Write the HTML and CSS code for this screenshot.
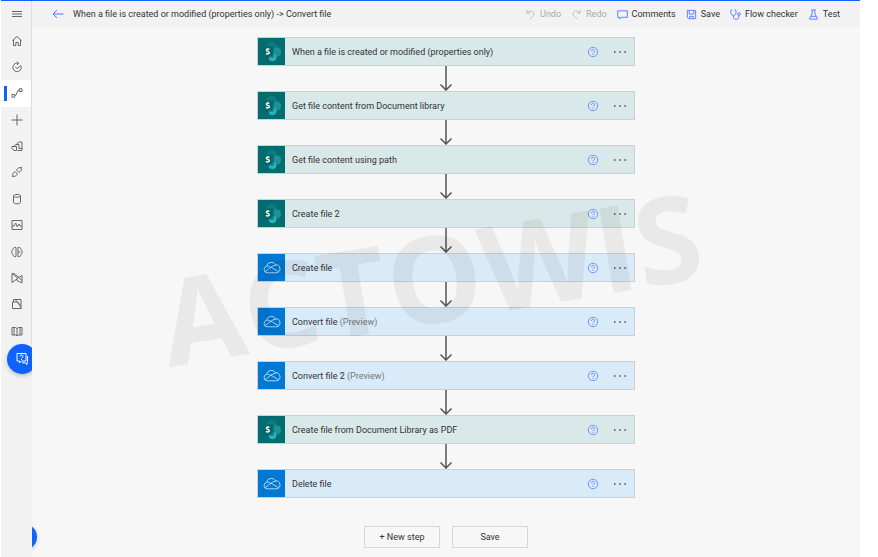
FILE: index.html
```html
<!DOCTYPE html>
<html lang="en">
<head>
    <meta charset="UTF-8">
    <meta name="viewport" content="width=device-width, initial-scale=1.0">
    <title>Edit your flow</title>
    <link rel="stylesheet" href="styles.css">
</head>
<body>
    <!-- Shared icons -->
    <svg class="sprite" aria-hidden="true">
        <symbol id="sharepoint" viewBox="0 0 28 28">
            <circle cx="14" cy="9.500" r="5.500" fill="#0b7c80"/>
            <circle cx="19" cy="14.500" r="5" fill="#1a9296"/>
            <circle cx="15" cy="20" r="4" fill="#28b5bd"/>
            <rect x="8" y="9" width="8.500" height="11.500" rx="1" fill="#035256" opacity="0.500"/>
            <rect x="5" y="9" width="10" height="10" rx="1" fill="#05686c"/>
            <path d="M11.800 11.800C10.600 11 8.700 11.300 8.700 12.700 8.700 14.200 11.700 13.600 11.700 15.200 11.700 16.700 9.500 16.800 8.300 16" fill="none" stroke="#fff" stroke-width="1.500"/>
        </symbol>
        <symbol id="onedrive" viewBox="0 0 28 28">
            <path d="M9.500 19.500a3.400 3.400 0 0 1-.6-6.700 5 5 0 0 1 9.300-1.600 4.200 4.200 0 0 1 1.200 8.300zM8.900 12.800c3-.6 4.600 1.200 12.500 5.500M7.200 18.500c3.500-2.500 6.500-6 11.500-7.200" fill="none" stroke="#b9dbf5"/>
        </symbol>
        <symbol id="help" viewBox="0 0 12 12">
            <circle cx="6" cy="6" r="4.700" fill="none" stroke="#6f93ff"/>
            <path d="M4.500 5a1.500 1.500 0 1 1 2.300 1.200Q6 6.600 6 7.200M6 8v1" fill="none" stroke="#6f93ff"/>
        </symbol>
        <symbol id="more" viewBox="0 0 14 4">
            <path d="M1 1.200h1.500v1.500H1zM6.200 1.200h1.500v1.500H6.200zM11.400 1.200h1.500v1.500h-1.500z" fill="#484848"/>
        </symbol>
        <symbol id="arrow" viewBox="0 0 14 25">
            <path d="M7 0v24M1.500 18.500 7 24l5.500-5.500" fill="none" stroke="#555" stroke-width="1.500"/>
        </symbol>
    </svg>

    <div class="app">
        <nav class="sidebar" aria-label="Main">
            <div class="menu">
                <button class="menu-item" type="button" aria-label="Menu"><svg viewBox="0 0 12 12"><path d="M1 3.500h10M1 6h10M1 8.500h10"/></svg></button>
                <a class="menu-item" href="#" aria-label="Home"><svg viewBox="0 0 12 12"><path d="M1.500 5.500 6 1.500l4.500 4M2.500 5v5.500h2.300V7.500h2.400v3h2.300V5"/></svg></a>
                <a class="menu-item" href="#" aria-label="Action items"><svg viewBox="0 0 12 12"><path d="M9.800 4.500A4.200 4.200 0 1 1 5.800 2.200L7.500 2.300M6 .500l1.700 1.800L6 4M4.300 6l1.600 1.500L9.500 5"/></svg></a>
                <a class="menu-item active" href="#" aria-label="My flows"><svg viewBox="0 0 12 12"><path d="M1 7.500h2.700v2.700H1zM8.200 1.800H11v2.700H8.200zM3.700 8.800C6.500 8.800 5.200 3 8.200 3"/></svg></a>
                <a class="menu-item" href="#" aria-label="Create"><svg viewBox="0 0 12 12"><path d="M6 .500v11M.500 6h11"/></svg></a>
                <a class="menu-item" href="#" aria-label="Templates"><svg viewBox="0 0 12 12"><path d="M5.500 4.500 7.500 2H11v8.500H6.500M1 6.500h4.500v4H3L1 8.700zM3 6.500 4.500 4.500H8v4h3"/></svg></a>
                <a class="menu-item" href="#" aria-label="Connectors"><svg viewBox="0 0 12 12"><path d="M1 11l1-1M11 1l-1 1M2 10C.800 8.500 2 7 4 5.500L6.500 8C5 10 3.500 11.200 2 10zM10 2C8.500.800 7 2 5.500 4L8 6.500C10 5 11.200 3.500 10 2z"/></svg></a>
                <a class="menu-item" href="#" aria-label="Data"><svg viewBox="0 0 12 12"><path d="M2.500 2.800v6.500c0 2 7 2 7 0V2.800M2.500 2.800c0-1.800 7-1.800 7 0s-7 1.800-7 0z"/></svg></a>
                <a class="menu-item" href="#" aria-label="Monitor"><svg viewBox="0 0 12 12"><path d="M1 1.500h10v9H1zM1 7h2l1.700-3L6.300 8 8 5l1 2h2"/></svg></a>
                <a class="menu-item" href="#" aria-label="AI Builder"><svg viewBox="0 0 12 12"><path d="M5 1.500v9C3 11 2 10 2 8.800.300 8 .300 4.500 2 3.500 2 2 3 1 5 1.500zM7 1.500v9c2 .500 2.800-.500 3-1.700 1.500-1 1.500-4.300 0-5.300C9.800 2 8.800 1 7 1.500M7 6h2.500"/></svg></a>
                <a class="menu-item" href="#" aria-label="Process advisor"><svg viewBox="0 0 12 12"><path d="M1 1.500v9L6 7M1 1.500 6.500 6M1 1.500h2L8 5.500M6 6.500l5-3v7.500L6 8.500zM7.500 5.500l3.500 3"/></svg></a>
                <a class="menu-item" href="#" aria-label="Solutions"><svg viewBox="0 0 12 12"><path d="M1.500 4h5l4 6.500h-9zM2.500 4V1.500H10v8M4 1.500 9.500 7"/></svg></a>
                <a class="menu-item" href="#" aria-label="Learn"><svg viewBox="0 0 12 12"><path d="M1 2.500h3.500L6 3.500l1.500-1H11v7.500H7L6 11l-1-1H1zM6 3.500V11M3 2.500V10M9 2.500V10"/></svg></a>
            </div>
            <button class="chat" type="button" aria-label="Ask a chatbot"><svg viewBox="0 0 14 14"><path d="M2 1.500h9v7.500H6.500L4.500 11V9H2zM12.500 4v6.500H12V12.500L10 10.800H7M5 4.500q0-1.500 1.500-1.500t1.500 1.300T6.500 6M6.500 7v1"/></svg></button>
        </nav>

        <div class="page">
            <header class="topbar">
                <a class="back" href="#" aria-label="Back"><svg viewBox="0 0 12 10"><path d="M11.500 5H1M5 1 1 5l4 4"/></svg></a>
                <h1>When a file is created or modified (properties only) -&gt; Convert file</h1>
                <div class="toolbar">
                    <button type="button" disabled><svg viewBox="0 0 12 12"><path d="M2 1v3.500h3.500M2 4.500C4.500 1.500 9.500 1.500 9.800 5 10 7.500 7.500 8.500 5 11"/></svg>Undo</button>
                    <button type="button" disabled><svg viewBox="0 0 12 12"><path d="M10 1v3.500H6.500M10 4.500C7.500 1.500 2.500 1.500 2.200 5 2 7.500 4.500 8.500 7 11"/></svg>Redo</button>
                    <button type="button"><svg viewBox="0 0 12 12"><path d="M.800 2h10.500v7H5l-2 2V9H.800z"/></svg>Comments</button>
                    <button type="button"><svg viewBox="0 0 12 12"><path d="M1.500 1.500h9v9h-8l-1-1zM3.500 1.500v4h5v-4M4 10.500V8h4v2.500"/></svg>Save</button>
                    <button type="button"><svg viewBox="0 0 12 12"><path d="M2.500 1H1v3c0 4 5.500 4 5.500 0V1H5M3.800 7v2c0 3 5.700 3 5.700 0V7"/><circle cx="9.800" cy="5.500" r="1.500"/></svg>Flow checker</button>
                    <button type="button"><svg viewBox="0 0 12 12"><path d="M3.500 1h5M4.500 1v4L1.500 11h9L7.500 5V1M3 8h6"/></svg>Test</button>
                </div>
            </header>

            <main class="canvas">
                <ol class="steps">
                    <li class="step sharepoint">
                        <svg class="logo"><use href="#sharepoint"/></svg>
                        <span class="name">When a file is created or modified (properties only)</span>
                        <button class="help" type="button" aria-label="Help"><svg><use href="#help"/></svg></button>
                        <button class="more" type="button" aria-label="More"><svg><use href="#more"/></svg></button>
                    </li>
                    <li class="link"><svg><use href="#arrow"/></svg></li>
                    <li class="step sharepoint">
                        <svg class="logo"><use href="#sharepoint"/></svg>
                        <span class="name">Get file content from Document library</span>
                        <button class="help" type="button" aria-label="Help"><svg><use href="#help"/></svg></button>
                        <button class="more" type="button" aria-label="More"><svg><use href="#more"/></svg></button>
                    </li>
                    <li class="link"><svg><use href="#arrow"/></svg></li>
                    <li class="step sharepoint">
                        <svg class="logo"><use href="#sharepoint"/></svg>
                        <span class="name">Get file content using path</span>
                        <button class="help" type="button" aria-label="Help"><svg><use href="#help"/></svg></button>
                        <button class="more" type="button" aria-label="More"><svg><use href="#more"/></svg></button>
                    </li>
                    <li class="link"><svg><use href="#arrow"/></svg></li>
                    <li class="step sharepoint">
                        <svg class="logo"><use href="#sharepoint"/></svg>
                        <span class="name">Create file 2</span>
                        <button class="help" type="button" aria-label="Help"><svg><use href="#help"/></svg></button>
                        <button class="more" type="button" aria-label="More"><svg><use href="#more"/></svg></button>
                    </li>
                    <li class="link"><svg><use href="#arrow"/></svg></li>
                    <li class="step onedrive">
                        <svg class="logo"><use href="#onedrive"/></svg>
                        <span class="name">Create file</span>
                        <button class="help" type="button" aria-label="Help"><svg><use href="#help"/></svg></button>
                        <button class="more" type="button" aria-label="More"><svg><use href="#more"/></svg></button>
                    </li>
                    <li class="link"><svg><use href="#arrow"/></svg></li>
                    <li class="step onedrive">
                        <svg class="logo"><use href="#onedrive"/></svg>
                        <span class="name">Convert file <small>(Preview)</small></span>
                        <button class="help" type="button" aria-label="Help"><svg><use href="#help"/></svg></button>
                        <button class="more" type="button" aria-label="More"><svg><use href="#more"/></svg></button>
                    </li>
                    <li class="link"><svg><use href="#arrow"/></svg></li>
                    <li class="step onedrive">
                        <svg class="logo"><use href="#onedrive"/></svg>
                        <span class="name">Convert file 2 <small>(Preview)</small></span>
                        <button class="help" type="button" aria-label="Help"><svg><use href="#help"/></svg></button>
                        <button class="more" type="button" aria-label="More"><svg><use href="#more"/></svg></button>
                    </li>
                    <li class="link"><svg><use href="#arrow"/></svg></li>
                    <li class="step sharepoint">
                        <svg class="logo"><use href="#sharepoint"/></svg>
                        <span class="name">Create file from Document Library as PDF</span>
                        <button class="help" type="button" aria-label="Help"><svg><use href="#help"/></svg></button>
                        <button class="more" type="button" aria-label="More"><svg><use href="#more"/></svg></button>
                    </li>
                    <li class="link"><svg><use href="#arrow"/></svg></li>
                    <li class="step onedrive">
                        <svg class="logo"><use href="#onedrive"/></svg>
                        <span class="name">Delete file</span>
                        <button class="help" type="button" aria-label="Help"><svg><use href="#help"/></svg></button>
                        <button class="more" type="button" aria-label="More"><svg><use href="#more"/></svg></button>
                    </li>
                </ol>
                <div class="actions">
                    <button type="button">+ New step</button>
                    <button type="button">Save</button>
                </div>
                <span class="bubble"></span>
            </main>
        </div>
        <div class="watermark">ACTOWIS</div>
    </div>
</body>
</html>
```
FILE: styles.css
```css
* {
    box-sizing: border-box;
}
body {
    margin: 0;
    background: #fff;
    color: #333;
    font: 9px/12px Roboto, "Noto Sans", sans-serif;
}
button {
    font: inherit;
    color: inherit;
    background: none;
    border: none;
    padding: 0;
    cursor: pointer;
}
svg {
    display: block;
    fill: none;
    stroke-width: 1;
}
.sprite {
    position: absolute;
    width: 0;
    height: 0;
}
.app {
    position: relative;
    display: flex;
    min-height: 100vh;
    margin: 0 18px 0 1px;
    border-top: 1px solid #0f62fe;
    overflow: hidden;
}

/* Left menu */
.sidebar {
    width: 31px;
    background: #f2f2f2;
    overflow: hidden;
}
.menu {
    display: grid;
    grid-auto-rows: 1fr;
    height: 343px;
    border-right: 1px solid #ddd;
}
.menu-item {
    display: flex;
    align-items: center;
    justify-content: center;
    border-left: 2px solid transparent;
}
.menu-item svg {
    width: 12px;
    height: 12px;
    stroke: #6b646e;
}
.menu-item.active {
    background: linear-gradient(#0f62fe, #0f62fe) 1px 50% / 3px 15px no-repeat #fff;
}
.chat {
    display: flex;
    align-items: center;
    width: 30px;
    height: 30px;
    margin-left: 6px;
    padding-left: 8px;
    border-radius: 50%;
    background: #0f62fe;
    box-shadow: 0 2px 4px rgba(0, 0, 0, 0.2);
}
.chat svg {
    width: 14px;
    height: 14px;
    stroke: #fff;
}

/* Header */
.page {
    flex: 1;
    display: flex;
    flex-direction: column;
    background: #f7f7f7;
}
.topbar {
    display: flex;
    align-items: center;
    height: 26px;
    padding: 0 20px;
    background: #f2f2f2;
}
.back svg {
    width: 12px;
    height: 10px;
    stroke: #4f7bff;
}
.topbar h1 {
    margin: 0 0 0 9px;
    font-size: 9px;
    font-weight: 400;
}
.toolbar {
    display: flex;
    gap: 10px;
    margin-left: auto;
}
.toolbar button {
    display: flex;
    align-items: center;
    gap: 4px;
}
.toolbar svg {
    width: 11px;
    height: 11px;
    stroke: #4f7bff;
}
.toolbar button:disabled {
    color: #aaa;
}
.toolbar button:disabled svg {
    stroke: #bbb;
}

/* Flow steps */
.canvas {
    position: relative;
    flex: 1;
    padding-top: 10px;
    overflow: hidden;
}
.steps {
    width: 378px;
    margin: 0 auto;
    padding: 0;
    list-style: none;
}
.step {
    display: flex;
    align-items: center;
    height: 29px;
    padding-right: 7px;
    border: 1px solid #ccd0d2;
}
.step.sharepoint {
    background: #d9e8e8;
}
.step.onedrive {
    background: #d9eaf8;
}
.logo {
    width: 27px;
    height: 27px;
}
.sharepoint .logo {
    background: #036c70;
}
.onedrive .logo {
    background: #0078d4;
}
.name {
    flex: 1;
    margin-left: 7px;
}
.name small {
    font-size: 9px;
    color: #777;
}
.help svg {
    width: 12px;
    height: 12px;
}
.more {
    margin-left: 14px;
}
.more svg {
    width: 14px;
    height: 4px;
}
.link {
    display: flex;
    justify-content: center;
    height: 25px;
}
.link svg {
    width: 14px;
    height: 25px;
}
.actions {
    display: flex;
    justify-content: center;
    gap: 12px;
    margin-top: 28px;
}
.actions button {
    width: 76px;
    height: 22px;
    border: 1px solid #d8d8d8;
}
.bubble {
    position: absolute;
    left: -21px;
    bottom: 7px;
    width: 26px;
    height: 26px;
    border-radius: 50%;
    background: #0f62fe;
    box-shadow: 0 1px 4px rgba(0, 0, 0, 0.2);
}

.watermark {
    position: absolute;
    top: 194px;
    left: 0;
    width: 100%;
    text-align: center;
    font-family: "Open Sans", sans-serif;
    font-size: 120px;
    line-height: 164px;
    font-weight: 700;
    color: rgba(0, 0, 0, 0.055);
    transform: rotate(-9.5deg);
    pointer-events: none;
}
```
